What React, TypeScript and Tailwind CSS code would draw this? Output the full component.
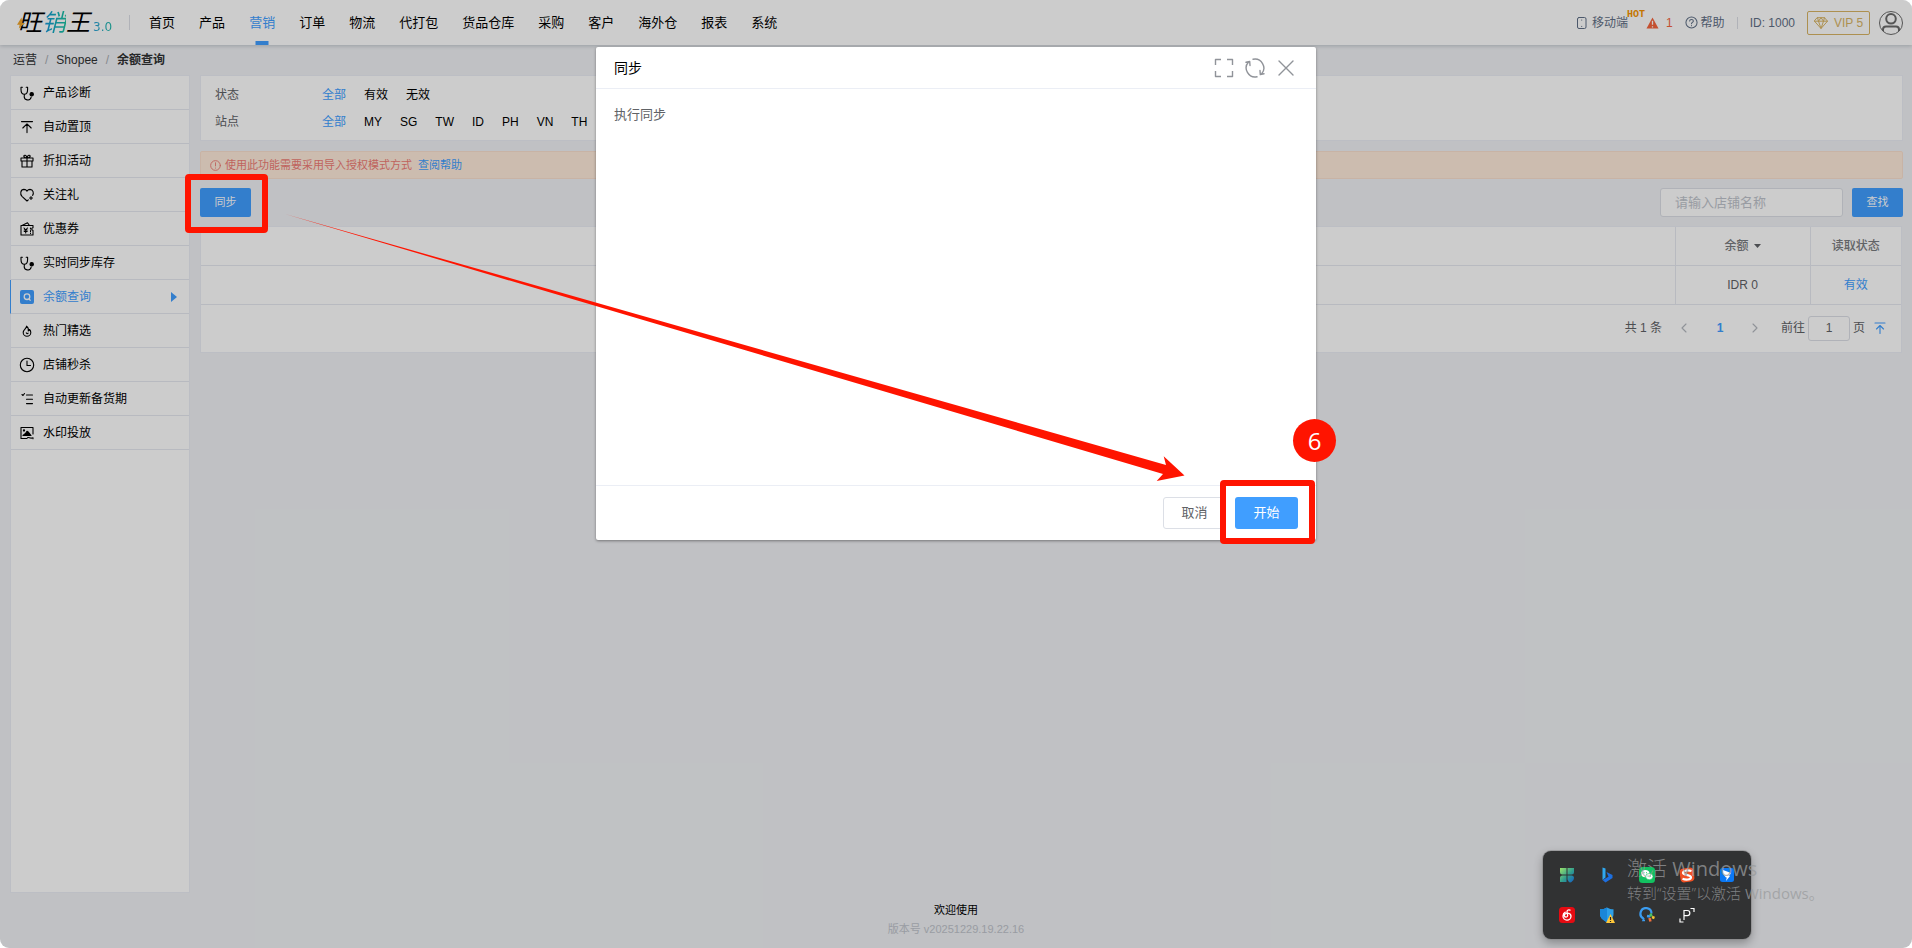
import React from "react";

const line = {
  fill: "none",
  stroke: "currentColor",
  strokeWidth: 1.1,
  strokeLinecap: "round" as const,
  strokeLinejoin: "round" as const,
};

const Stethoscope = () => (
  <svg viewBox="0 0 16 16" className="size-4" {...line}>
    <path d="M3.400 2.200H2v2.300c0 3 1.300 4.800 3.300 4.800s3.300-1.800 3.300-4.800V2.200H7.200M5.300 9.500v1.300a3.500 3.500 0 0 0 6.900 1.200" />
    <circle cx="12.700" cy="9.300" r="1.700" fill="currentColor" />
  </svg>
);
const ToTop = () => (
  <svg viewBox="0 0 16 16" className="size-4" {...line}>
    <path d="M2.500 2.600h11M8 13.600V4.800M3.800 9 8 4.800 12.200 9" />
  </svg>
);
const Gift = () => (
  <svg viewBox="0 0 16 16" className="size-4" {...line}>
    <path d="M2 5h12v3H2zM3 8v6h10V8M8 5v9M8 5C6.500 5 4.800 4.300 4.800 3.100S7.500 1.600 8 5c.5-3.400 3.200-3.100 3.200-1.900S9.500 5 8 5" />
  </svg>
);
const Heart = () => (
  <svg viewBox="0 0 16 16" className="size-4" {...line}>
    <path d="M9.300 12.800 8 14 3 9.300C.8 7 1.400 2.600 5 2.400c1.300 0 2.300.6 3 1.700.7-1.100 1.700-1.700 3-1.700 3.200.2 4.100 3.700 2.600 6M12 9.500v3M10.500 11h3" />
  </svg>
);
const Coupon = () => (
  <svg viewBox="0 0 16 16" className="size-4" {...line}>
    <path d="M2 4.500h12v2.300a1.300 1.300 0 0 0 0 2.600V14H2V9.400M2 4.500V14M3 4.500l5.500-2.700 2 2.700M5 7l1.700 2L8.500 7M6.700 9v3M5.200 9h3M5.200 10.500h3M11.500 7v1M11.500 9.500v1M11.500 12v.5" />
  </svg>
);
const SearchSquare = () => (
  <svg viewBox="0 0 16 16" className="size-4">
    <rect x="1" y="1" width="14" height="14" rx="2" fill="#409eff" />
    <circle cx="8" cy="7.700" r="2.800" fill="none" stroke="#fff" strokeWidth="1.300" />
    <path d="m10 10 1.600 1.600" stroke="#fff" strokeWidth="1.300" />
  </svg>
);
const Flame = () => (
  <svg viewBox="0 0 16 16" className="size-4" {...line}>
    <path d="M7.500 3.200c.6 1.800-3.300 3.600-3.300 6.300a3.800 3.800 0 0 0 7.600 0c0-1.400-.6-2.300-1.300-3-.2 1-.7 1.400-1.200 1.400.4-2-.4-3.800-1.800-4.700ZM7.300 9.800c.3 1 1.300 1 1.800.3" />
  </svg>
);
const Clock = () => (
  <svg viewBox="0 0 16 16" className="size-4" {...line}>
    <circle cx="8" cy="8" r="6.700" />
    <path d="M8 4v4.500h3.500" />
  </svg>
);
const ListIcon = () => (
  <svg viewBox="0 0 16 16" className="size-4" {...line}>
    <path d="M7.500 4h6M7.500 8.300h6M7.500 12.600h6M3 3.500l1 1 1.500-2" />
  </svg>
);
const Picture = () => (
  <svg viewBox="0 0 16 16" className="size-4" {...line}>
    <path d="M14 9V2.500H2v11h6" />
    <circle cx="5" cy="5.500" r=".6" fill="currentColor" />
    <path d="m4 10.500 2.500-2 1.500-2.200 1.500 1 2.500 3.200Z" fill="currentColor" />
    <path d="M8.500 12.700c1.800-1 2.400 1.500 5.500 0v1" />
  </svg>
);

const NAV = ["首页", "产品", "营销", "订单", "物流", "代打包", "货品仓库", "采购", "客户", "海外仓", "报表", "系统"];
const SIDE: [string, () => React.ReactElement][] = [
  ["产品诊断", Stethoscope],
  ["自动置顶", ToTop],
  ["折扣活动", Gift],
  ["关注礼", Heart],
  ["优惠券", Coupon],
  ["实时同步库存", Stethoscope],
  ["余额查询", SearchSquare],
  ["热门精选", Flame],
  ["店铺秒杀", Clock],
  ["自动更新备货期", ListIcon],
  ["水印投放", Picture],
];
const SITES = ["全部", "MY", "SG", "TW", "ID", "PH", "VN", "TH"];
const STATES = ["全部", "有效", "无效"];

function Header() {
  return (
    <header className="relative flex h-[45px] items-center bg-white pr-[9px] pl-[18px] shadow-[0_1px_4px_rgba(0,21,41,0.2)]">
      <a href="#home" className="relative flex items-center text-2xl leading-6 italic">
        <span className="text-black">旺</span>
        <span className="bg-gradient-to-r from-[#1c8fe0] to-[#1fc2a0] bg-clip-text text-transparent">销</span>
        <span className="text-black">王</span>
        <svg viewBox="0 0 10 12" className="absolute top-[6px] -left-px h-3 w-[9px]">
          <path d="M5 0 0 8h3L2 12l7-6H6z" fill="#f0a52c" />
        </svg>
        <span className="mt-2 ml-[3px] bg-gradient-to-r from-[#2f9fd8] to-[#1fb8a6] bg-clip-text font-['DejaVu_Sans'] text-xs leading-4 text-transparent not-italic">3.0</span>
      </a>
      <span className="ml-[17px] h-[15px] w-px bg-[#dcdfe6]" />
      <nav className="ml-[19px] flex h-full items-center gap-6 text-[13px] text-black">
        {NAV.map((n) => (
          <a key={n} href="#nav" className={n === "营销" ? "relative flex h-full items-center text-[#409eff]" : "flex h-full items-center"}>
            {n}
            {n === "营销" && <span className="absolute bottom-0 left-1/2 h-1 w-[13px] -translate-x-1/2 bg-[#409eff]" />}
          </a>
        ))}
      </nav>
      <div className="ml-auto flex items-center text-xs text-[#5f6f86]">
        <a href="#mobile" className="relative flex items-center gap-1">
          <svg viewBox="0 0 12 12" className="size-3" {...line} strokeWidth="1">
            <rect x="1.500" y=".5" width="8.500" height="11" rx="1.500" />
            <path d="M5.700 3v.2M5.700 9.300v.2" />
          </svg>
          移动端
          <b className="absolute -top-[6px] left-[51px] font-['Liberation_Mono'] text-[10px] leading-3 text-[#f59300]">HOT</b>
        </a>
        <a href="#warn" className="ml-[18px] flex items-center gap-[7px] text-[#f5643c]">
          <svg viewBox="0 0 14 13" className="h-3 w-[13px]">
            <path d="M7 .5 13.500 12.500H.5Z" fill="#f5643c" />
            <path d="M7 4v4.500M7 10v1.500" stroke="#fff" strokeWidth="1.400" />
          </svg>
          1
        </a>
        <a href="#help" className="ml-3 flex items-center gap-[3px]">
          <svg viewBox="0 0 14 14" className="size-[13px]" {...line}>
            <circle cx="7" cy="7" r="6" />
            <path d="M5 5.500C5 3.200 9 3.200 9 5.500 9 7 7 6.800 7 8.300M7 10.300v.2" />
          </svg>
          帮助
        </a>
        <span className="ml-3 h-3 w-px bg-[#dcdfe6]" />
        <span className="ml-3">ID: 1000</span>
        <button type="button" className="ml-3 flex h-6 w-[63px] items-center justify-center gap-[6px] rounded-xs border border-[#d9b565] text-[#d9b565]">
          <svg viewBox="0 0 14 12" className="h-3 w-[14px]" {...line} strokeWidth="1">
            <path d="M3.500.7h7l3 3.500L7 11.500.5 4.200ZM.5 4.200h13M4.500 4.200 7 11.500l2.500-7.300M3.500.7l1 3.500L7 .7l2.500 3.500 1-3.500" />
          </svg>
          VIP 5
        </button>
        <a href="#me" aria-label="账户" className="ml-[9px]">
          <svg viewBox="0 0 24 24" className="size-6" fill="none" stroke="#6b6b6b">
            <circle cx="12" cy="12" r="11.500" />
            <circle cx="12" cy="7.800" r="4.800" strokeWidth="2" />
            <path d="M4 20v-1.500A3 3 0 0 1 7 15.500h10a3 3 0 0 1 3 3V20" strokeWidth="2" />
          </svg>
        </a>
      </div>
    </header>
  );
}

function Sidebar() {
  return (
    <aside className="w-[180px] shrink-0 border border-[#ebeef5] bg-white text-xs text-black">
      {SIDE.map(([name, Icon]) => {
        const active = name === "余额查询";
        return (
          <a
            key={name}
            href="#menu"
            className={
              active
                ? "-ml-px flex h-[34px] items-center gap-2 border-b border-b-[#e6e9f0] border-l border-l-[#409eff] pl-2 text-[#409eff]"
                : "flex h-[34px] items-center gap-2 border-b border-[#e6e9f0] pl-2"
            }
          >
            <Icon />
            {name}
            {active && (
              <svg viewBox="0 0 6 10" className="mr-3 ml-auto h-[10px] w-[6px]">
                <path d="M0 0l6 5-6 5z" fill="#409eff" />
              </svg>
            )}
          </a>
        );
      })}
    </aside>
  );
}

function FilterRow({ label, items }: { label: string; items: string[] }) {
  return (
    <div className="flex h-[27px] items-center">
      <span className="w-[107px] text-[#606266]">{label}</span>
      <div className="flex gap-[18px] text-black">
        {items.map((i) => (
          <button type="button" key={i} className={i === "全部" ? "text-[#409eff]" : ""}>
            {i}
          </button>
        ))}
      </div>
    </div>
  );
}

function Content() {
  return (
    <main className="flex min-w-0 flex-1 flex-col text-xs">
      <section className="border border-[#ebeef5] bg-white py-[5px] pl-[14px]">
        <FilterRow label="状态" items={STATES} />
        <FilterRow label="站点" items={SITES} />
      </section>
      <div className="mt-[10px] flex h-7 items-center rounded-xs border border-[#fbe0cf] bg-[#ffecdb] pl-[9px] text-[11px] text-[#f07c76]">
        <svg viewBox="0 0 12 12" className="mr-1 size-[11px]" {...line} strokeWidth="1">
          <circle cx="6" cy="6" r="5.300" />
          <path d="M6 3v3.500M6 8.700v.2" />
        </svg>
        使用此功能需要采用导入授权模式方式
        <a href="#doc" className="ml-[6px] text-[#409eff]">查阅帮助</a>
      </div>
      <div className="mt-[9px] flex items-center justify-between">
        <div className="relative">
          <button type="button" className="block h-[29px] w-[51px] rounded-xs bg-[#409eff] text-[11px] text-white">同步</button>
          <span className="absolute -top-[14px] -right-[17px] -bottom-4 -left-[15px] z-30 rounded-[4px] border-[6px] border-[#ff1400]" />
        </div>
        <div className="flex gap-[9px]">
          <input
            aria-label="店铺名称"
            placeholder="请输入店铺名称"
            className="h-[29px] w-[183px] rounded-[3px] border border-[#dcdfe6] bg-white px-[14px] text-[13px] placeholder:text-[#c0c4cc]"
          />
          <button type="button" className="h-[29px] w-[51px] rounded-xs bg-[#409eff] text-[11px] text-white">查找</button>
        </div>
      </div>
      <section className="mt-[9px] mr-px border border-[#ebeef5] bg-white text-[#606266]">
        <table className="w-full table-fixed border-collapse text-center">
          <thead>
            <tr className="h-[38px] border-b border-[#e6e9f0]">
              <th className="border-r border-[#e6e9f0]" />
              <th className="w-[135px] border-r border-[#e6e9f0] font-medium text-[#7a7c80]">
                余额
                <svg viewBox="0 0 7 4" className="mb-[2px] ml-[5px] inline h-1 w-[7px]">
                  <path d="M0 0h7L3.500 4z" fill="#606266" />
                </svg>
              </th>
              <th className="w-[91px] font-medium text-[#7a7c80]">读取状态</th>
            </tr>
          </thead>
          <tbody>
            <tr className="h-[39px] border-b border-[#e6e9f0]">
              <td className="border-r border-[#e6e9f0]" />
              <td className="border-r border-[#e6e9f0]">IDR 0</td>
              <td className="text-[#409eff]">有效</td>
            </tr>
          </tbody>
        </table>
        <div className="flex h-[47px] items-center justify-end pr-[15px]">
          <span>共 1 条</span>
          <button type="button" aria-label="上一页" className="ml-[18px] text-[#b4b8bf]">
            <svg viewBox="0 0 8 10" className="h-[10px] w-2" {...line}><path d="M6 1 2 5l4 4" /></svg>
          </button>
          <button type="button" className="ml-7 w-2 font-bold text-[#409eff]">1</button>
          <button type="button" aria-label="下一页" className="ml-[27px] text-[#b4b8bf]">
            <svg viewBox="0 0 8 10" className="h-[10px] w-2" {...line}><path d="m2 1 4 4-4 4" /></svg>
          </button>
          <label className="ml-[22px] flex items-center gap-[3px]">
            前往
            <input defaultValue="1" className="h-[25px] w-[42px] rounded-[3px] border border-[#dcdfe6] text-center" />
            页
          </label>
          <button type="button" aria-label="回到顶部" className="ml-[9px] text-[#409eff]">
            <svg viewBox="0 0 12 12" className="size-3" {...line}>
              <path d="M1 1h10M6 11.500V3.500M2.500 7 6 3.500 9.500 7" />
            </svg>
          </button>
        </div>
      </section>
    </main>
  );
}

function Dialog() {
  return (
    <div className="absolute inset-0 z-20 flex items-start justify-center bg-black/20 pt-[47px]">
      <div role="dialog" aria-label="同步" className="w-[720px] rounded-xs bg-white shadow-[0_1px_3px_rgba(0,0,0,0.4)]">
        <div className="flex h-[42px] items-center border-b border-[#ebeef5] px-[18px] text-sm text-black">
          同步
          <div className="ml-auto flex items-center gap-[11px] pr-[2px] text-[#909399]">
            <button type="button" aria-label="全屏">
              <svg viewBox="0 0 20 20" className="size-5" {...line} strokeWidth="1.400" strokeLinecap="butt">
                <path d="M1.500 7V1.500H7M13 1.500h5.500V7M18.500 13v5.500H13M7 18.500H1.500V13" />
              </svg>
            </button>
            <button type="button" aria-label="刷新">
              <svg viewBox="0 0 20 20" className="size-5" {...line} strokeWidth="1.400">
                <path d="M8 1.200A9 9 0 0 1 16.500 16M12 18.800A9 9 0 0 1 3.500 4M1 4.300l3.700-.8.300 4M19 15.700l-3.700.8-.3-4" />
              </svg>
            </button>
            <button type="button" aria-label="关闭">
              <svg viewBox="0 0 18 18" className="mx-px size-[18px]" {...line} strokeWidth="1.400">
                <path d="m2 2 14 14M16 2 2 16" />
              </svg>
            </button>
          </div>
        </div>
        <div className="min-h-[396px] px-[18px] pt-4 text-[13px] leading-5 text-[#606266]">执行同步</div>
        <div className="flex h-[55px] items-center justify-end gap-[9px] border-t border-[#ebeef5] pr-[18px] text-[13px]">
          <button type="button" className="h-8 w-[63px] rounded-[3px] border border-[#dcdfe6] text-[#606266]">取消</button>
          <div className="relative">
            <button type="button" className="block h-8 w-[63px] rounded-[3px] bg-[#409eff] text-white">开始</button>
            <span className="absolute -top-[17px] -right-[17px] -bottom-[15px] -left-[15px] rounded-[4px] border-[6px] border-[#ff1400]" />
            <span className="absolute -top-[78px] left-[58px] flex size-[43px] items-center justify-center rounded-full bg-[#ff1400] font-['Open_Sans'] text-2xl text-white">6</span>
          </div>
        </div>
      </div>
    </div>
  );
}

function Tray() {
  return (
    <div className="absolute right-[161px] bottom-[9px] z-30 grid h-[88px] w-[208px] grid-cols-5 place-items-center rounded-lg bg-[#313233] p-1 shadow-[0_4px_10px_rgba(0,0,0,0.3)] ring-1 ring-[#8a8b8c]/60">
      <svg viewBox="0 0 16 16" className="size-4">
        <defs>
          <linearGradient id="clover" x1="0" y1="0" x2="1" y2="1">
            <stop offset="0" stopColor="#9be36a" /><stop offset=".55" stopColor="#2f9c8e" /><stop offset="1" stopColor="#1560c8" />
          </linearGradient>
        </defs>
        <path d="M1 1h6.500v6.500H3.500Q1 7.500 1 5ZM8.500 1H15v4q0 2.500-2.500 2.500h-4ZM3.500 8.500h4V15H1v-4Q1 8.500 3.500 8.500ZM8.500 8.500h4Q15 8.500 15 11t-2.500 4T8.500 12.500Z" fill="url(#clover)" />
      </svg>
      <svg viewBox="0 0 16 16" className="size-4">
        <path d="M3.500.5 6.500 1.600v9L3.500 13Z" fill="#2fa8f0" />
        <path d="m7.500 5 6 3v3l-7 4.500-3-2.500 6-3.200Z" fill="#1d6fe0" />
      </svg>
      <svg viewBox="0 0 16 16" className="size-4">
        <rect width="16" height="16" rx="3.500" fill="#12c160" />
        <ellipse cx="6.300" cy="6.600" rx="4.200" ry="3.600" fill="#fff" />
        <ellipse cx="10.300" cy="9.600" rx="3.700" ry="3.100" fill="#fff" stroke="#12c160" strokeWidth=".6" />
        <path d="M5 5.700v.1M7.500 5.700v.1M9 9v.1M11.500 9v.1" stroke="#12c160" strokeWidth="1" strokeLinecap="round" />
      </svg>
      <svg viewBox="0 0 16 16" className="size-4">
        <rect x="1" y="1" width="14" height="14" rx="4" fill="#f05023" transform="rotate(-8 8 8)" />
        <path d="M12.500 4C8 2.600 4 4 4 6s8 1.700 8 4.200-5 3-8.500 1.600" fill="none" stroke="#fff" strokeWidth="2.200" />
      </svg>
      <svg viewBox="0 0 16 16" className="size-4">
        <rect x="1" y="1" width="14" height="14" rx="2.500" fill="#0a78f5" />
        <path d="m4 3 8 3-2 3h1l-4 5 .8-3.500H7L4 7Z" fill="#fff" />
      </svg>
      <svg viewBox="0 0 16 16" className="size-4">
        <rect width="16" height="16" rx="3.500" fill="#e60b12" />
        <path d="M11 3.200C9 2.500 7.800 3.400 8 5l.7 3.500a1.700 1.700 0 1 1-2.300-1.700C7.800 5.800 12 5.800 12 9.200A4 4 0 0 1 4 9c0-1.800 1-3.200 2.300-3.800" fill="none" stroke="#fff" strokeWidth="1.300" strokeLinecap="round" />
      </svg>
      <svg viewBox="0 0 16 16" className="size-4">
        <path d="M8 .5c2 1.300 4.500 1.800 6.500 1.800V7c0 4-3 6.500-6.500 8C4.500 13.500 1 11 1 7V2.300C3.500 2.300 6 1.800 8 .5Z" fill="#2d9fe8" />
        <path d="M8 .5V15C4.500 13.500 1 11 1 7V2.300C3.500 2.300 6 1.800 8 .5Z" fill="#1a86d8" />
        <path d="m11.500 7 4.500 9H7Z" fill="#ffc83a" />
        <path d="M11.500 10v3M11.500 14v1" stroke="#222" strokeWidth="1.200" />
      </svg>
      <svg viewBox="0 0 16 16" className="size-4" fill="none">
        <path d="M4.500 11.500A5.500 5.500 0 1 1 12.500 6.500" stroke="#3b9cf0" strokeWidth="2.200" />
        <path d="M6 13.500h-2l1-2.500" stroke="#3b9cf0" strokeWidth="1.500" />
        <path d="m8 9 3 .5" stroke="#3b9cf0" strokeWidth="2.500" />
        <path d="m11.500 6.500 1 3" stroke="#49c166" strokeWidth="2.500" />
        <path d="m13 10 2.500 1" stroke="#f5c431" strokeWidth="2.500" />
        <path d="m10.500 11 1 3.500" stroke="#f0703c" strokeWidth="2.500" />
      </svg>
      <svg viewBox="0 0 16 16" className="size-4" fill="none" stroke="#fff" strokeWidth="1.200">
        <path d="M11.500 1.500H15V5M1 11.500V15h3.500M5 13V3.500h3.300c3.400 0 3.400 5.200 0 5.200H5" />
      </svg>
    </div>
  );
}

export default function App() {
  return (
    <div className="relative flex min-h-screen flex-col overflow-hidden rounded-[9px] bg-[#f0f2f5] font-['Liberation_Sans','Noto_Sans_CJK_SC',sans-serif]">
      <Header />
      <nav aria-label="面包屑" className="flex h-[30px] items-center gap-2 pl-[13px] text-xs text-[#303133]">
        <a href="#ops">运营</a>
        <span className="text-[#a8abb2]">/</span>
        <a href="#shopee">Shopee</a>
        <span className="text-[#a8abb2]">/</span>
        <b>余额查询</b>
      </nav>
      <div className="flex flex-1 gap-[10px] pr-[9px] pl-[10px]">
        <Sidebar />
        <Content />
      </div>
      <footer className="flex h-[55px] flex-col items-center pt-2 text-[11px] leading-[19px] text-black">
        <p>欢迎使用</p>
        <p className="text-[#c0c4cc]">版本号 v20251229.19.22.16</p>
      </footer>
      <Dialog />
      <svg viewBox="0 0 900 268" className="pointer-events-none absolute top-[214px] left-[285px] z-30 h-[268px] w-[900px]">
        <path d="M0 0 881 251 878.700 242.300 899.500 261.500 871.700 267 878 260Z" fill="#ff1400" />
      </svg>
      <Tray />
      <div className="pointer-events-none absolute right-[88px] bottom-[43px] z-40 w-[197px] font-['Open_Sans','Noto_Sans_CJK_SC',sans-serif] font-light whitespace-nowrap text-[#999b9d]/75">
        <p className="text-xl leading-6">激活 <span className="font-normal">Windows</span></p>
        <p className="text-[15px] leading-6">转到“设置”以激活 <span className="font-normal">Windows。</span></p>
      </div>
    </div>
  );
}
